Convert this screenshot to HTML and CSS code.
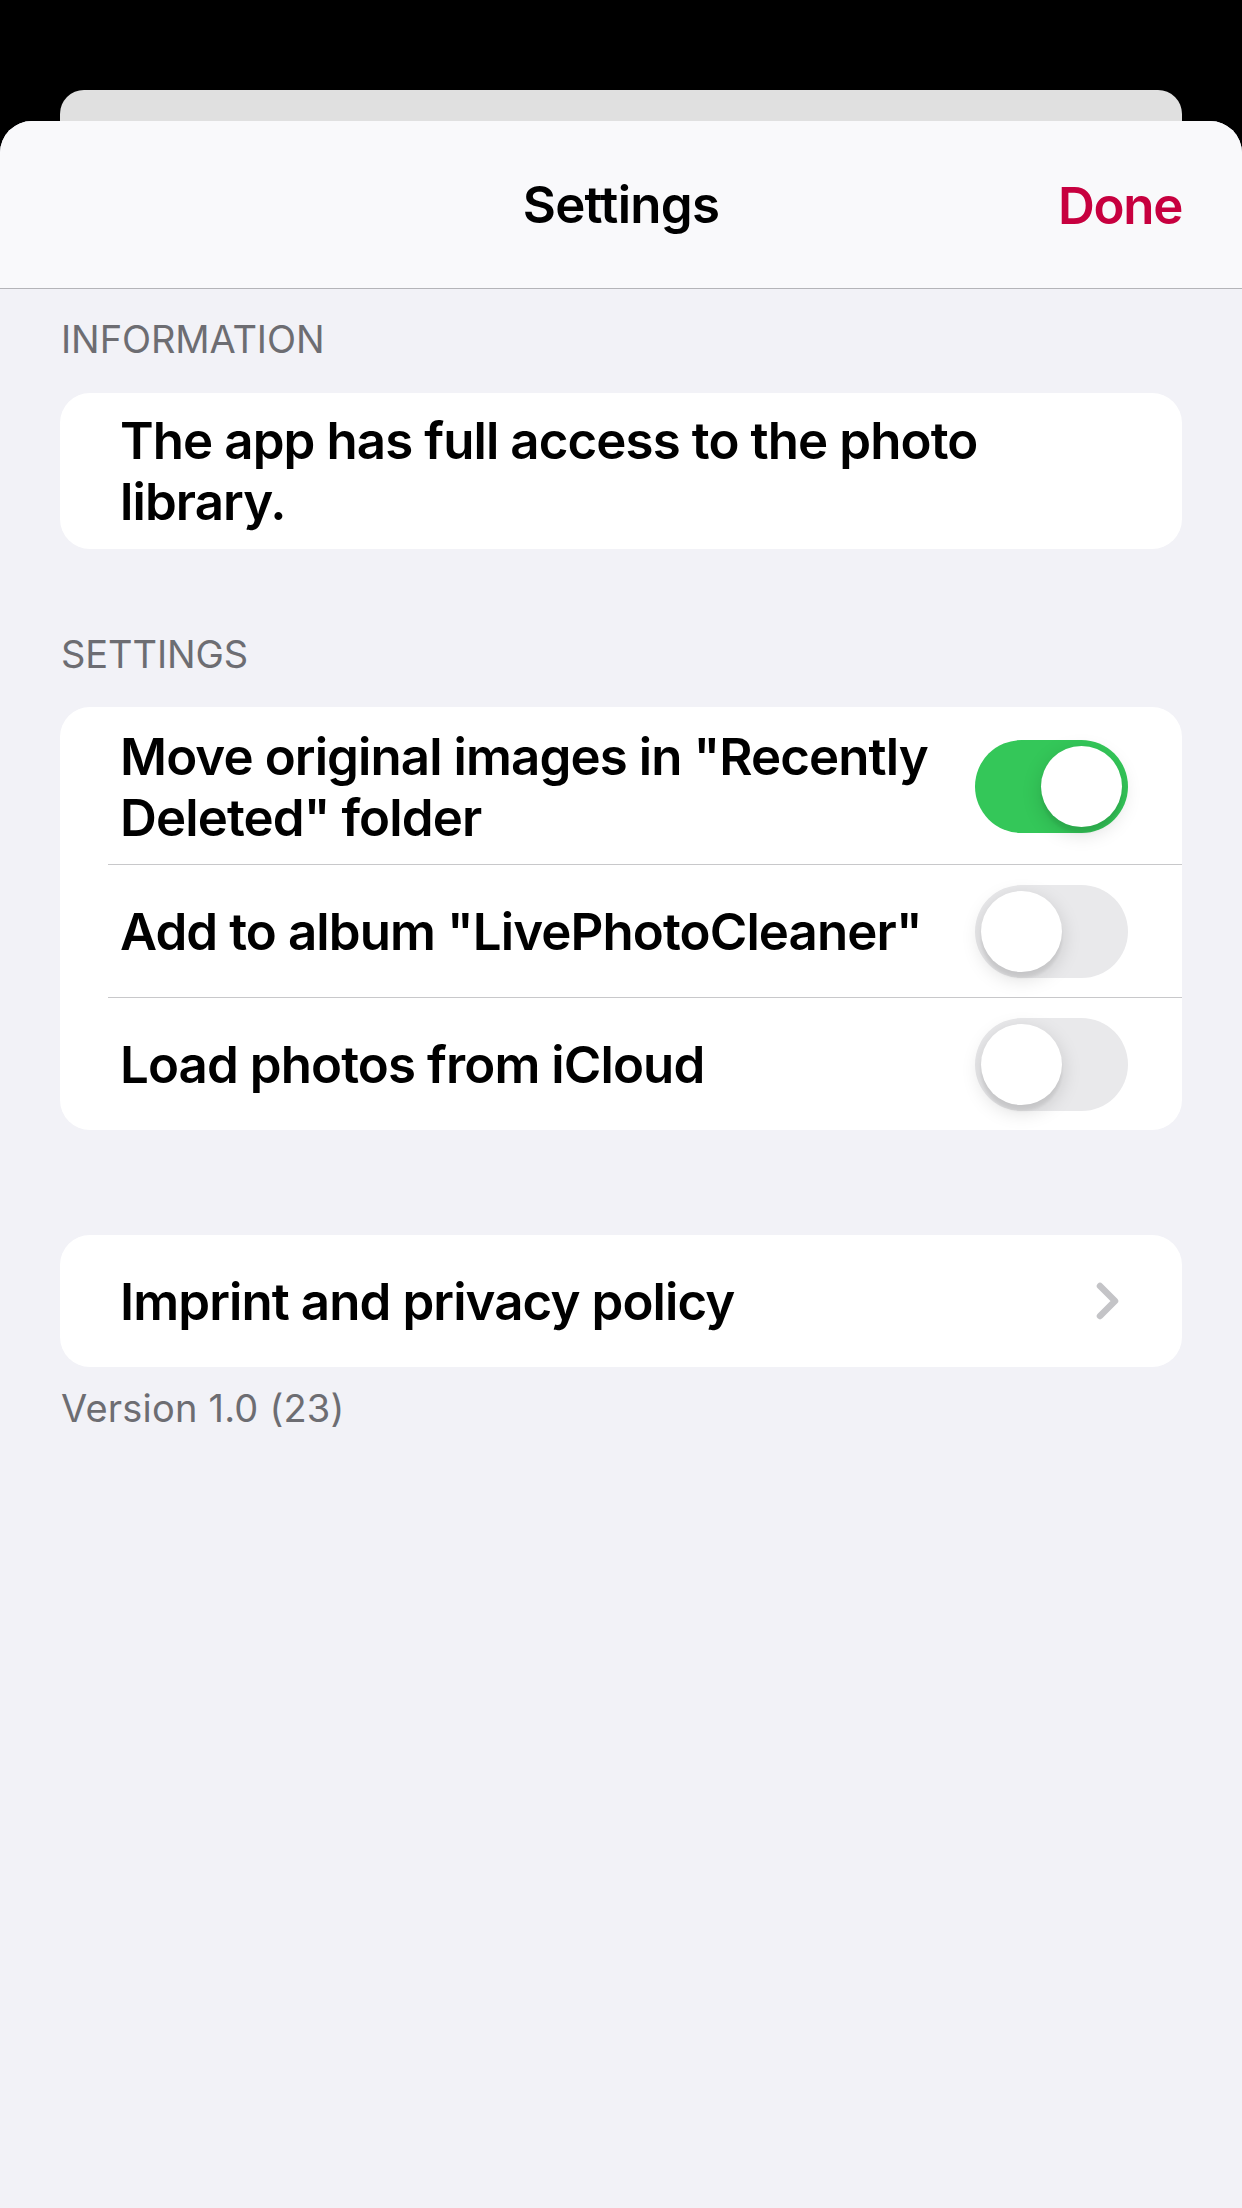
FILE: index.html
```html
<!DOCTYPE html>
<html lang="en">
<head>
<meta charset="utf-8">
<title>Settings</title>
<link rel="stylesheet" href="styles.css">
</head>
<body>
<div class="screen">
  <div class="back-sheet"></div>
  <div class="sheet">
    <header class="navbar">
      <div class="nav-title">Settings</div>
      <div class="nav-done">Done</div>
    </header>
    <main class="content">
      <div class="section-header">INFORMATION</div>
      <div class="card card-info">
        <div class="info-text">The app has full access to the photo library.</div>
      </div>

      <div class="section-header section-header-2">SETTINGS</div>
      <div class="card">
        <div class="row row-tall">
          <div class="row-label">Move original images in "Recently Deleted" folder</div>
          <div class="toggle toggle-on"><div class="knob"></div></div>
        </div>
        <div class="separator"></div>
        <div class="row">
          <div class="row-label">Add to album "LivePhotoCleaner"</div>
          <div class="toggle"><div class="knob"></div></div>
        </div>
        <div class="separator"></div>
        <div class="row">
          <div class="row-label">Load photos from iCloud</div>
          <div class="toggle"><div class="knob"></div></div>
        </div>
      </div>

      <div class="card card-link">
        <div class="row row-link">
          <div class="row-label">Imprint and privacy policy</div>
          <svg class="chevron" width="24" height="38" viewBox="0 0 24 38">
            <path d="M4 4 L19 19 L4 34" fill="none" stroke="#C4C4C7" stroke-width="6.5" stroke-linecap="round" stroke-linejoin="round"/>
          </svg>
        </div>
      </div>
      <div class="footer">Version 1.0 (23)</div>
    </main>
  </div>
</div>
</body>
</html>
```
FILE: styles.css
```css
* { box-sizing: border-box; }

html, body {
  margin: 0;
  padding: 0;
  background: #000000;
  font-family: "Inter", "Noto Sans", "Liberation Sans", sans-serif;
}

.screen {
  width: 1242px;
  height: 2208px;
  padding-top: 90px;
  display: flex;
  flex-direction: column;
  overflow: hidden;
}

.back-sheet {
  height: 31px;
  margin: 0 60px;
  background: #E0E0E0;
  border-radius: 24px 24px 0 0;
  flex: none;
}

.sheet {
  flex: 1;
  background: #F2F2F7;
  border-radius: 32px 32px 0 0;
  overflow: hidden;
  display: flex;
  flex-direction: column;
}

.navbar {
  height: 168px;
  flex: none;
  background: #F9F9FB;
  border-bottom: 1px solid #B4B4B8;
  display: flex;
  align-items: center;
  justify-content: center;
  position: relative;
}

.nav-title {
  font-size: 51px;
  font-weight: 600;
  color: #000;
  letter-spacing: -0.7px;
}

.nav-done {
  position: absolute;
  right: 60px;
  top: 50%;
  transform: translateY(-50%);
  font-size: 51px;
  font-weight: 600;
  color: #C7003F;
  letter-spacing: -1.3px;
}

.content {
  padding: 26px 60px 0 60px;
  display: flex;
  flex-direction: column;
}

.section-header {
  font-size: 38px;
  line-height: 48px;
  color: #6D6D72;
  padding-left: 1px;
  margin-bottom: 30px;
  letter-spacing: -0.1px;
}

.section-header-2 {
  margin-top: 81px;
  margin-bottom: 29px;
}

.card {
  background: #FFFFFF;
  border-radius: 30px;
  overflow: hidden;
}

.card-info {
  padding: 17px 60px 17px 60px;
}

.info-text,
.row-label {
  font-size: 51px;
  line-height: 61px;
  font-weight: 600;
  color: #000;
  letter-spacing: -0.9px;
}

.row {
  min-height: 132px;
  display: flex;
  align-items: center;
  justify-content: space-between;
  padding: 0 54px 0 60px;
  gap: 36px;
}

.row-tall {
  min-height: 157px;
  padding-top: 18px;
  padding-bottom: 16px;
}

.separator {
  height: 1px;
  background: #C8C8CA;
  margin-left: 48px;
}

.toggle {
  flex: none;
  width: 153px;
  height: 93px;
  border-radius: 47px;
  background: #E9E9EB;
  padding: 6px;
  display: flex;
  justify-content: flex-start;
}

.toggle-on {
  background: #34C759;
  justify-content: flex-end;
}

.knob {
  width: 81px;
  height: 81px;
  border-radius: 50%;
  background: #FFFFFF;
  box-shadow: 0 6px 20px rgba(0, 0, 0, 0.15), 0 6px 3px rgba(0, 0, 0, 0.06);
}

.card-link {
  margin-top: 105px;
}

.row-link {
  padding-right: 62px;
}

.chevron {
  flex: none;
  display: block;
}

.footer {
  margin-top: 17px;
  padding-left: 1px;
  font-size: 38px;
  line-height: 48px;
  color: #6D6D72;
  letter-spacing: 0.2px;
}
```
